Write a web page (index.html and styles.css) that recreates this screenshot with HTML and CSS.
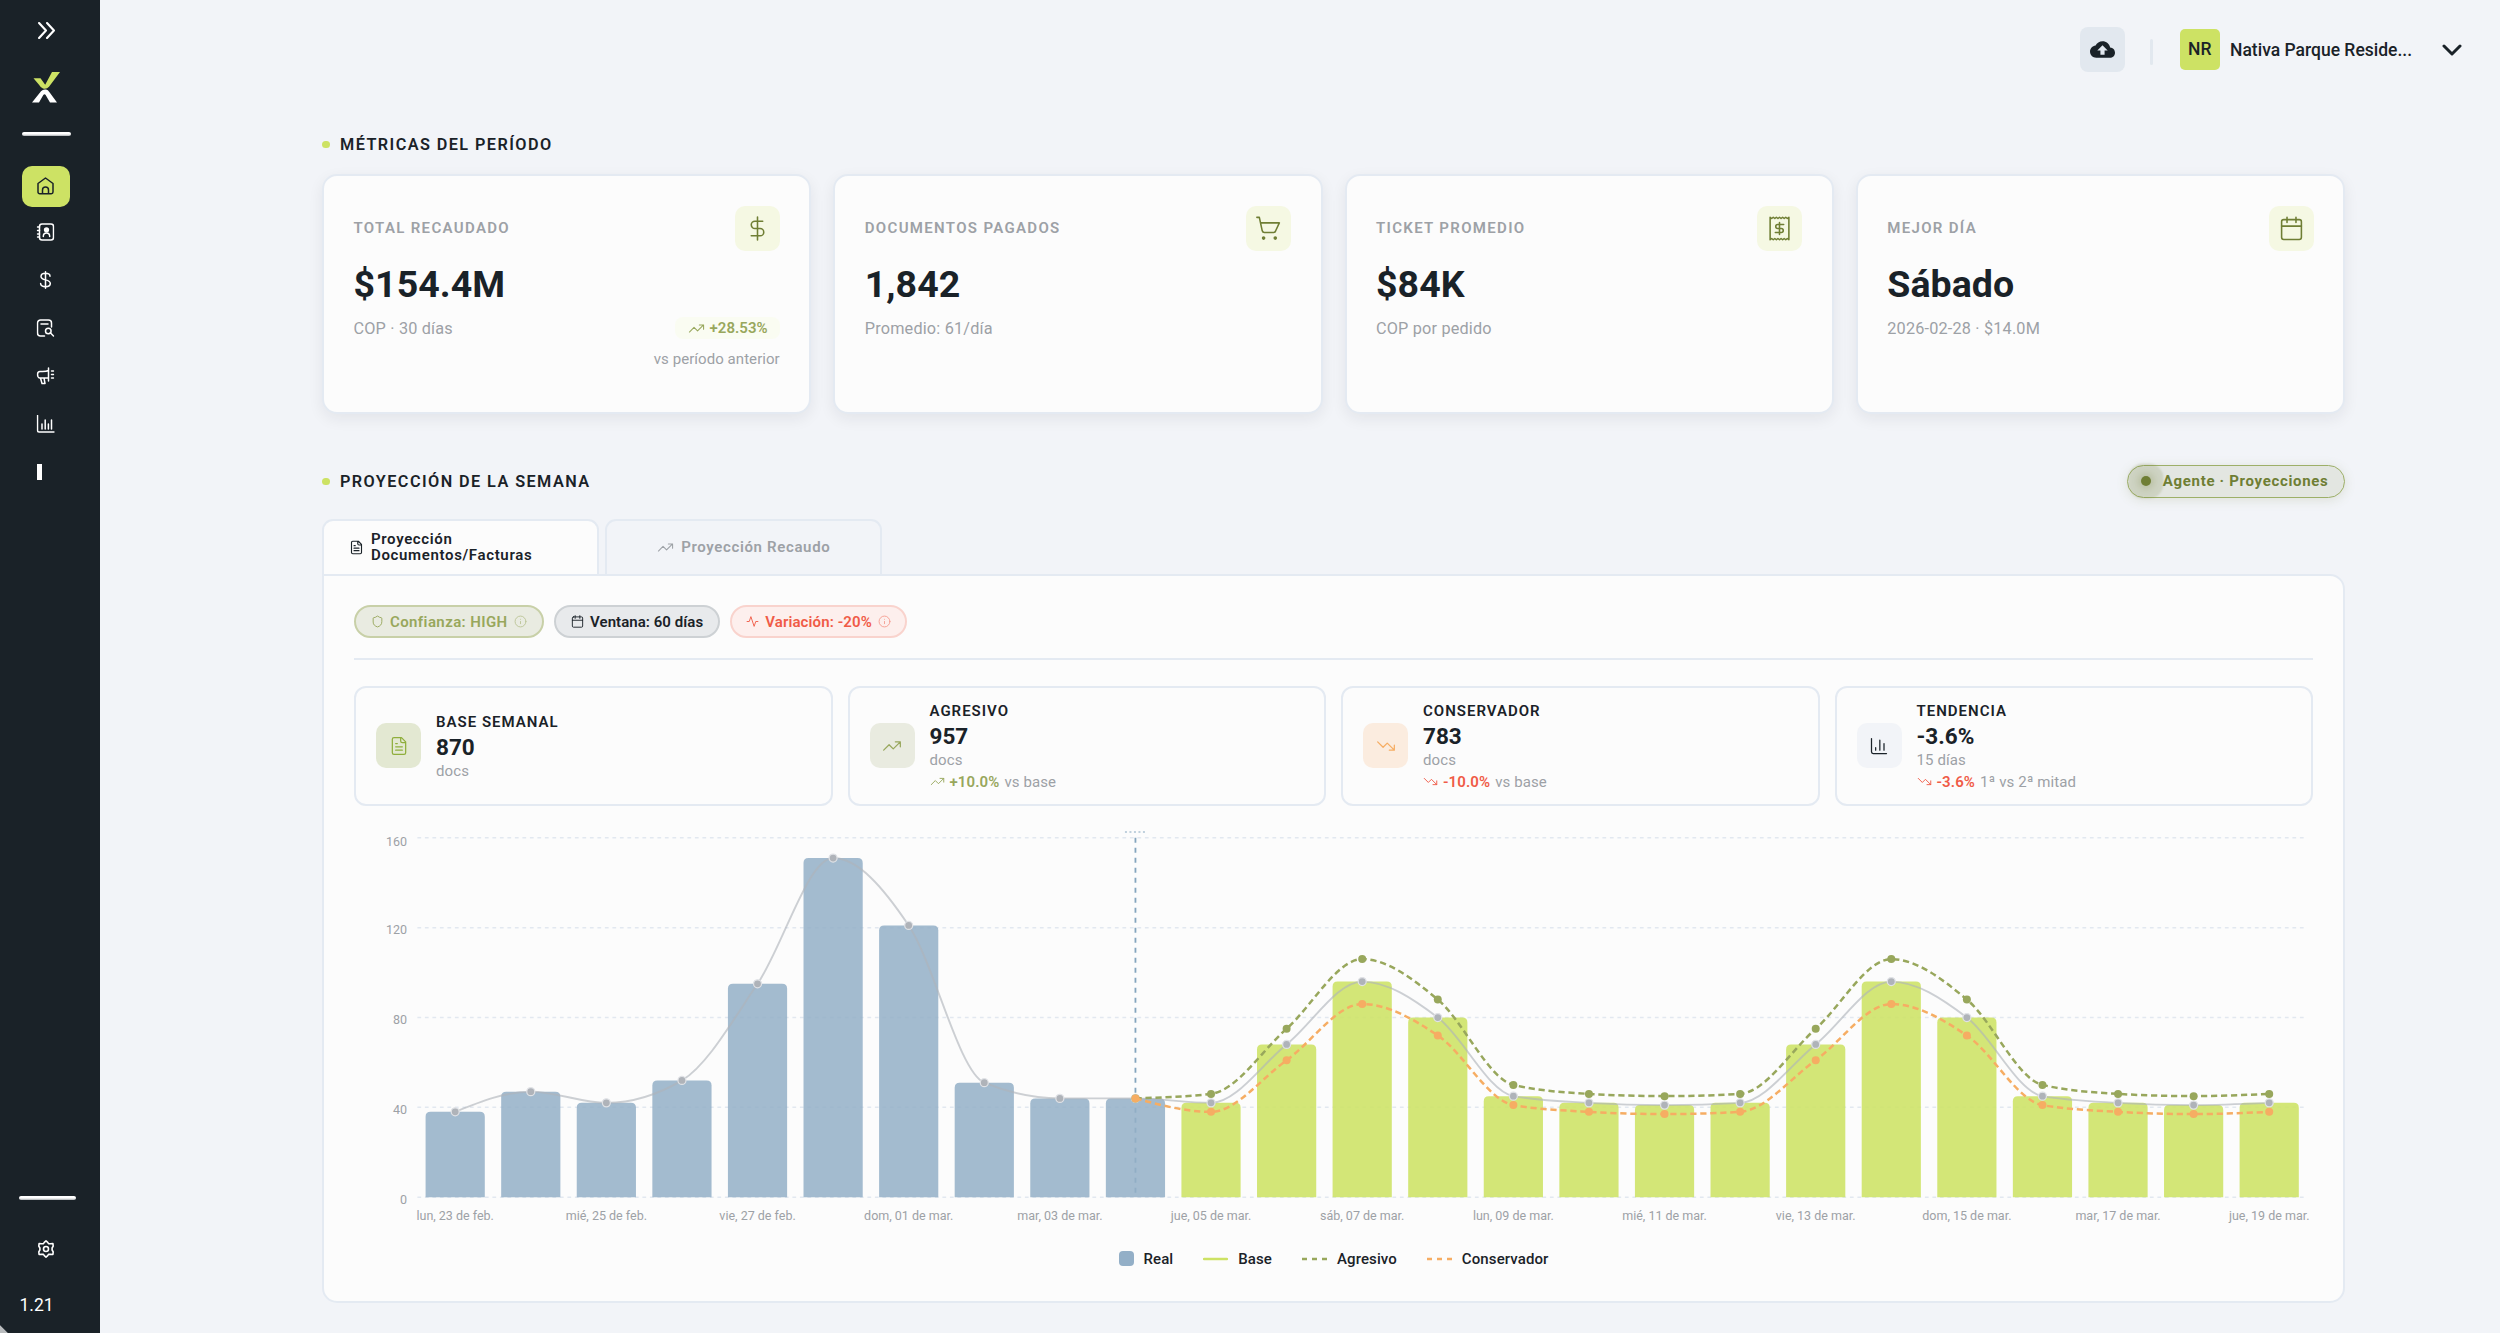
FILE: index.html
```html
<!DOCTYPE html>
<html lang="es">
<head>
<meta charset="utf-8">
<title>Métricas y proyecciones</title>
<link rel="stylesheet" href="styles.css">
</head>
<body>
<svg class="sprite" aria-hidden="true">
  <symbol id="i-dollar" viewBox="0 0 24 24"><path d="M12 1v22M17 5H9.500a3.500 3.500 0 0 0 0 7h5a3.500 3.500 0 0 1 0 7H6"/></symbol>
  <symbol id="i-cart" viewBox="0 0 24 24"><circle cx="7.300" cy="21.200" r="1" fill="currentColor"/><circle cx="18.500" cy="21.200" r="1" fill="currentColor"/><path d="M.8 1.300h2.400L6 14.200q.4 1.600 2 1.600h9q1.500 0 1.900-1.600L22.400 6.600H4.400"/></symbol>
  <symbol id="i-receipt" viewBox="0 0 24 24"><path d="M3 1.200l1.500 1.200 1.500-1.200 1.500 1.200 1.500-1.200 1.500 1.200L12 1.200l1.500 1.200 1.500-1.200 1.500 1.200 1.500-1.200 1.500 1.200L21 1.200v21.600l-1.500-1.200-1.500 1.200-1.500-1.200-1.500 1.200-1.500-1.200-1.500 1.200-1.500-1.200L9 22.800l-1.500-1.200L6 22.800l-1.500-1.200L3 22.800z"/><path d="M16 8.200h-5.700a1.900 1.900 0 0 0 0 3.800h3.400a1.900 1.900 0 0 1 0 3.800H8M12 6.200v11.600"/></symbol>
  <symbol id="i-calendar" viewBox="0 0 24 24"><rect x="2.500" y="3.500" width="19" height="19" rx="2"/><path d="M7.700 1.200v5M16.300 1.200v5M2.500 9.700h19"/></symbol>
  <symbol id="i-up" viewBox="0 0 24 24"><path d="M22 7l-8.500 8.500-5-5L2 17M16 7h6v6"/></symbol>
  <symbol id="i-down" viewBox="0 0 24 24"><path d="M22 17l-8.500-8.500-5 5L2 7M16 17h6v-6"/></symbol>
  <symbol id="i-file" viewBox="0 0 24 24"><path d="M15 2H6a2 2 0 0 0-2 2v16a2 2 0 0 0 2 2h12a2 2 0 0 0 2-2V7zM14 2v4a2 2 0 0 0 2 2h4M10 9H8M16 13H8M16 17H8"/></symbol>
  <symbol id="i-shield" viewBox="0 0 24 24"><path d="M20 13c0 5-3.500 7.500-7.660 8.950a1 1 0 0 1-.67-.01C7.500 20.500 4 18 4 13V6a1 1 0 0 1 1-1c2 0 4.500-1.200 6.240-2.720a1.170 1.170 0 0 1 1.520 0C14.510 3.810 17 5 19 5a1 1 0 0 1 1 1z"/></symbol>
  <symbol id="i-info" viewBox="0 0 24 24"><circle cx="12" cy="12" r="10"/><path d="M12 16v-4M12 8h.01"/></symbol>
  <symbol id="i-activity" viewBox="0 0 24 24"><path d="M22 12h-4l-3 9L9 3l-3 9H2"/></symbol>
  <symbol id="i-bars" viewBox="0 0 24 24"><path d="M3 3v16a2 2 0 0 0 2 2h16M8 17v-3M13 17V5M18 17V9"/></symbol>
</svg>

<div class="app">
  <aside class="sidebar">
    <svg class="expand" viewBox="0 0 16 16"><path d="M1 1l6.500 7L1 15M8.500 1L15 8l-6.500 7"/></svg>
    <svg class="logo" viewBox="0 0 28 32"><path class="logo-top" d="M1.500 7.300h7l4.700 6.500L20 1h8L17 15.700q-2.500 3-6 1.800-2.500-.9-4-3.700z"/><path class="logo-bottom" d="M0 31.500L9 20.300q2-2.300 5-1.700 2 .3 3.500 2.700L25 31.500h-7l-4.500-7.800q-1.200-1-2.200.3L7 31.500z"/></svg>
    <hr class="rule">
    <nav class="nav">
      <a class="nav-item active"><svg viewBox="0 0 18 18"><path d="M1.500 6.500L9 1l7.500 5.500V15a1.700 1.700 0 0 1-1.700 1.700H3.200A1.700 1.700 0 0 1 1.500 15zM6 16.500V13a3 3 0 0 1 6 0v3.500"/></svg></a>
      <a class="nav-item"><svg viewBox="0 0 18 18"><rect x="3" y="1" width="14" height="16" rx="2.500"/><path d="M1 4h2M1 7.500h2M1 11h2M1 14h2M6.800 13.500c0-2 1.200-3.500 3.200-3.500s3.200 1.500 3.200 3.500"/><circle class="solid" cx="10" cy="6.800" r="1.900"/></svg></a>
      <a class="nav-item"><svg viewBox="0 0 18 18"><path d="M9 .8v16.400M13.500 5.200c0-1.900-1.800-3-4.500-3s-4.500 1.200-4.500 3.200c0 4.600 9.300 2.300 9.300 7.100 0 2-1.900 3.200-4.800 3.200s-4.900-1.200-4.900-3.200"/></svg></a>
      <a class="nav-item"><svg viewBox="0 0 18 18"><path d="M8 17H4a3 3 0 0 1-3-3V4a3 3 0 0 1 3-3h8a3 3 0 0 1 3 3v4M4.500 5h7M13.800 13.800L17 17"/><circle cx="11.800" cy="12" r="2.800"/></svg></a>
      <a class="nav-item"><svg viewBox="0 0 18 18"><path d="M12 1v13M12 3.500C9 5 6 4.500 3.500 4.500 2 4.500 1 6 1 7.500S2 11 3.500 11H12M4 11l1.500 5.500h3L7.500 11M15 4h2M15 7.500h2M15 11h2"/></svg></a>
      <a class="nav-item"><svg viewBox="0 0 18 18"><path d="M1 .5V15.500a1.500 1.500 0 0 0 1.500 1.500H18M5.500 9v5M8.700 5v9M11.900 9v5M15 5v9"/></svg></a>
      <a class="nav-item"><span class="block"></span></a>
    </nav>
    <div class="side-foot">
      <hr class="rule wide">
      <svg class="gear" viewBox="0 0 18 18"><path d="M7.300 2.400L9 .9l1.700 1.500.8 1.200 2 .1 2.400-.2.300 2.600-1.100 1.900v2l1.100 1.900-.3 2.600-2.400-.2-2 .1-.8 1.200L9 17.100l-1.700-1.500-.8-1.200-2-.1-2.400.2-.3-2.600L2.900 10V8L1.800 6.100l.3-2.600 2.400.2 2-.1z"/><circle cx="9" cy="9" r="2.500"/></svg>
      <span class="version">1.21</span>
    </div>
  </aside>

  <div class="page">
    <header class="topbar">
      <button class="upload"><svg viewBox="0 0 24 24"><path d="M19.350 10.040C18.670 6.590 15.640 4 12 4 9.110 4 6.600 5.640 5.350 8.040 2.340 8.360 0 10.910 0 14c0 3.310 2.690 6 6 6h13c2.760 0 5-2.240 5-5 0-2.640-2.050-4.780-4.650-4.960zM14 13v4h-4v-4H7l5-5 5 5h-3z"/></svg></button>
      <span class="sep"></span>
      <span class="avatar">NR</span>
      <span class="company">Nativa Parque Reside...</span>
      <svg class="caret" viewBox="0 0 20 12"><path d="M2 2l8 8 8-8"/></svg>
    </header>

    <main class="content">
      <div class="section-head"><h2>MÉTRICAS DEL PERÍODO</h2></div>
      <section class="metrics">
        <article class="metric">
          <div class="metric-head"><span>TOTAL RECAUDADO</span><i class="tile"><svg><use href="#i-dollar"/></svg></i></div>
          <strong>$154.4M</strong>
          <div class="metric-foot"><span>COP · 30 días</span>
            <div class="compare"><b><svg><use href="#i-up"/></svg>+28.53%</b><small>vs período anterior</small></div></div>
        </article>
        <article class="metric">
          <div class="metric-head"><span>DOCUMENTOS PAGADOS</span><i class="tile"><svg><use href="#i-cart"/></svg></i></div>
          <strong>1,842</strong>
          <div class="metric-foot"><span>Promedio: 61/día</span></div>
        </article>
        <article class="metric">
          <div class="metric-head"><span>TICKET PROMEDIO</span><i class="tile"><svg><use href="#i-receipt"/></svg></i></div>
          <strong>$84K</strong>
          <div class="metric-foot"><span>COP por pedido</span></div>
        </article>
        <article class="metric">
          <div class="metric-head"><span>MEJOR DÍA</span><i class="tile"><svg><use href="#i-calendar"/></svg></i></div>
          <strong>Sábado</strong>
          <div class="metric-foot"><span>2026-02-28 · $14.0M</span></div>
        </article>
      </section>

      <div class="section-head second"><h2>PROYECCIÓN DE LA SEMANA</h2><span class="agent"><i></i>Agente · Proyecciones</span></div>
      <div class="tabs">
        <button class="tab current"><svg><use href="#i-file"/></svg><span>Proyección Documentos/Facturas</span></button>
        <button class="tab"><svg><use href="#i-up"/></svg><span>Proyección Recaudo</span></button>
      </div>
      <section class="panel">
        <div class="chips">
          <span class="chip olive"><svg><use href="#i-shield"/></svg>Confianza: HIGH<svg class="info"><use href="#i-info"/></svg></span>
          <span class="chip dark"><svg><use href="#i-calendar"/></svg>Ventana: 60 días</span>
          <span class="chip red"><svg><use href="#i-activity"/></svg>Variación: -20%<svg class="info"><use href="#i-info"/></svg></span>
        </div>
        <div class="stats">
          <article class="stat"><i class="tile green"><svg><use href="#i-file"/></svg></i>
            <div><h3>BASE SEMANAL</h3><strong>870</strong><p>docs</p></div></article>
          <article class="stat"><i class="tile sage"><svg><use href="#i-up"/></svg></i>
            <div><h3>AGRESIVO</h3><strong>957</strong><p>docs</p><p class="delta gain"><svg><use href="#i-up"/></svg><b>+10.0%</b>vs base</p></div></article>
          <article class="stat"><i class="tile orange"><svg><use href="#i-down"/></svg></i>
            <div><h3>CONSERVADOR</h3><strong>783</strong><p>docs</p><p class="delta loss"><svg><use href="#i-down"/></svg><b>-10.0%</b>vs base</p></div></article>
          <article class="stat"><i class="tile plain"><svg><use href="#i-bars"/></svg></i>
            <div><h3>TENDENCIA</h3><strong>-3.6%</strong><p>15 días</p><p class="delta loss"><svg><use href="#i-down"/></svg><b>-3.6%</b>1ª vs 2ª mitad</p></div></article>
        </div>
        <svg class="chart" id="chart" viewBox="0 0 1960 415"></svg>
        <div class="legend">
          <span><i class="swatch"></i>Real</span>
          <span><svg class="key base" viewBox="0 0 25 4"><path d="M1 2h23"/></svg>Base</span>
          <span><svg class="key high" viewBox="0 0 25 4"><path d="M0 2h25"/></svg>Agresivo</span>
          <span><svg class="key low" viewBox="0 0 25 4"><path d="M0 2h25"/></svg>Conservador</span>
        </div>
      </section>
    </main>
  </div>
</div>
<script src="chart.js"></script>
</body>
</html>
```
FILE: styles.css
```css
* { box-sizing: border-box; }
body {
  margin: 0;
  background: #f2f4f8;
  color: #1a2228;
  font-family: Roboto, "Liberation Sans", sans-serif;
  font-size: 15px;
}
h2, h3, p { margin: 0; font-size: inherit; }
button { font: inherit; border: 0; padding: 0; }
i { font-style: normal; }
svg { display: block; flex: none; fill: none; stroke: currentColor; stroke-width: 1.5; stroke-linecap: round; stroke-linejoin: round; }
.sprite { position: absolute; width: 0; height: 0; }
.app { display: flex; height: 1333px; overflow: hidden; }

/* Sidebar */
.sidebar {
  width: 100px;
  flex: none;
  padding: 22px 0 18.500px;
  display: flex;
  flex-direction: column;
  background: linear-gradient(45deg, #b9bcbe 5px, transparent 6px), #1a2228;
  color: #fff;
}
.expand { width: 17px; height: 17px; margin-left: 38px; stroke-width: 2; }
.logo { width: 28px; height: 32px; margin: 32px 0 0 31.500px; stroke: none; }
.logo-top { fill: #cde264; }
.logo-bottom { fill: #fff; }
.rule { width: 49px; height: 4px; margin: 29px 0 0 21.500px; border: 0; border-radius: 2px; background: linear-gradient(#fff 50%, #a9adb0); flex: none; }
.nav { display: flex; flex-direction: column; gap: 7px; margin: 30px 0 0 22px; }
.nav-item { width: 48px; height: 41px; border-radius: 10px; display: flex; align-items: center; justify-content: center; }
.nav-item.active + .nav-item { margin-top: -2.500px; }
.nav-item svg { width: 18px; height: 18px; stroke-width: 1.500; transform: translateX(-.5px); }
.nav-item.active { background: #cde264; color: #1a2228; }
.nav-item.active svg { transform: translate(-.5px, -1px); }
.nav-item .solid { fill: currentColor; }
.block { width: 5px; height: 16px; background: #fff; margin-right: 13px; }
.side-foot { margin-top: auto; }
.rule.wide { width: 57px; margin: 0 0 40px 19px; }
.gear { width: 18px; height: 18px; margin-left: 37px; stroke-width: 1.600; }
.version { display: block; margin: 36.500px 0 0 19.500px; font-size: 17.500px; line-height: 20px; }

/* Top bar */
.page { flex: 1; min-width: 0; }
.topbar { height: 99px; padding: 0 38px 0 0; display: flex; align-items: center; justify-content: flex-end; }
.upload { width: 45px; height: 45px; border-radius: 8px; background: #e2e8ef; display: grid; place-items: center; color: #1a2228; }
.upload svg { width: 25px; height: 25px; fill: currentColor; stroke: none; }
.sep { width: 3px; height: 26px; margin: 4px 26.500px 0 25px; background: #e2e8ef; border-radius: 2px; }
.avatar { width: 40.500px; height: 41px; border-radius: 5px; background: #cde264; display: grid; place-items: center; font-size: 17.500px; font-weight: 500; padding-bottom: 2px; }
.company { width: 214px; margin-left: 10px; font-size: 17.500px; font-weight: 500; white-space: nowrap; }
.caret { width: 20px; height: 12px; margin-left: -2px; stroke-width: 3; }

/* Sections */
.content { width: 2023px; margin-left: 222px; padding-top: 33px; }
.section-head { display: flex; align-items: center; justify-content: space-between; height: 25px; }
.section-head.second { height: 32.500px; margin-top: 51px; }
.section-head h2 { display: flex; align-items: center; gap: 10.500px; font-size: 16.250px; font-weight: 600; letter-spacing: 1.420px; }
.section-head h2::before { content: ""; width: 7.500px; height: 7.500px; border-radius: 50%; background: #cde264; }
.agent { height: 33px; padding: 0 15.500px 0 12.500px; display: flex; align-items: center; gap: 12px; border: 1.500px solid #9daf68; border-radius: 17px; background: #e3e6e1; color: #6f7e34; font-weight: 700; letter-spacing: .680px; box-shadow: 0 2px 12px rgba(111, 126, 52, .16); }
.agent i { width: 10px; height: 10px; border-radius: 50%; background: #6f7e34; box-shadow: 0 0 10px 2px rgba(111, 126, 52, .35), 0 0 2px 12.500px rgba(111, 126, 52, .17); }

.metrics { display: grid; grid-template-columns: repeat(4, 1fr); gap: 22px; margin-top: 16.600px; }
.metric { height: 240.500px; padding: 30px 29.500px; border: 2px solid #e4eaf2; border-radius: 15px; background: #fcfcfc; box-shadow: 0 5px 15px rgba(26, 34, 40, .07); }
.metric-head { display: flex; justify-content: space-between; align-items: center; color: #9da1a6; font-weight: 600; letter-spacing: 1.330px; }
.tile { width: 45px; height: 45px; flex: none; border-radius: 10px; display: grid; place-items: center; background: #f5f8e3; color: #6f7e34; }
.tile svg { width: 25px; height: 25px; stroke-width: 1.500; }
.metric strong { display: block; margin-top: 11.500px; font-size: 37.500px; line-height: 45px; font-weight: 700; letter-spacing: .05px; }
.metric-foot { display: flex; justify-content: space-between; align-items: flex-start; margin-top: 10px; color: #9da1a6; font-size: 16.250px; line-height: 24px; letter-spacing: .18px; }
.compare { display: flex; flex-direction: column; align-items: flex-end; letter-spacing: .06px; }
.compare b { display: flex; align-items: center; gap: 4px; height: 22px; padding: 0 12px 0 13px; border-radius: 8px; background: #fafcf2; color: #98a75c; font-size: 15px; font-weight: 600; }
.compare b svg { width: 17px; height: 17px; }
.compare small { margin-top: 10px; font-size: 15px; line-height: 20px; }

/* Tabs and panel */
.tabs { display: flex; gap: 6px; margin-top: 21px; }
.tab { width: 277px; height: 55px; display: flex; align-items: center; justify-content: center; gap: 7.500px; border: 2px solid #e4eaf2; border-bottom: 0; border-radius: 11px 11px 0 0; background: #f2f4f8; color: #9da1a6; font-weight: 600; letter-spacing: .650px; line-height: 16.500px; text-align: left; }
.tab svg { width: 17px; height: 17px; }
.tab.current { background: #fcfcfc; color: #1a2228; padding: 0 26px 0 25px; justify-content: flex-start; gap: 7px; }
.tab.current svg { width: 15px; height: 15px; stroke-width: 1.800; }
.panel { height: 729.500px; padding: 29.500px 30px; border: 2px solid #e4eaf2; border-radius: 0 15px 15px 15px; background: #fcfcfc; }
.chips { display: flex; gap: 10px; padding-bottom: 20px; border-bottom: 2px solid #e4eaf2; }
.chip { height: 33px; padding: 0 15px; display: flex; align-items: center; gap: 6px; border: 2px solid; border-radius: 17px; font-weight: 600; }
.chip svg { width: 13px; height: 13px; stroke-width: 1.700; }
.chip .info { opacity: .55; margin-left: .5px; }
.olive { background: #e9ebe1; border-color: #c8d0a8; color: #98a75c; letter-spacing: .4px; }
.dark { background: #e8eaec; border-color: #cdd1d4; color: #1a2228; letter-spacing: .05px; }
.red { background: #fdefed; border-color: #f9d3cd; color: #f05b47; letter-spacing: .12px; padding: 0 14px; }
.stats { display: grid; grid-template-columns: repeat(4, 1fr); gap: 15px; margin-top: 25.500px; }
.stat { height: 120.500px; padding: 0 20px; display: flex; align-items: center; gap: 15px; border: 2px solid #e4eaf2; border-radius: 12px; }
.stat .tile svg { width: 20px; height: 20px; }
.green { background: #e3e8d2; color: #8fae3c; }
.sage { background: #e9ebe0; color: #98a75c; }
.orange { background: #fbecdf; color: #f6ad63; }
.plain { background: #f2f4f8; color: #1a2228; }
.stat h3 { line-height: 22px; font-weight: 600; letter-spacing: 1px; }
.stat strong { display: block; font-size: 22.500px; line-height: 28px; font-weight: 700; }
.stat p { line-height: 20px; color: #9da1a6; letter-spacing: .1px; }
.stat .delta { display: flex; align-items: center; gap: 5px; margin-top: 2px; }
.delta svg { width: 15px; height: 15px; }
.delta b { font-weight: 600; }
.gain b, .gain svg { color: #98a75c; }
.loss b, .loss svg { color: #f05b47; }

/* Chart */
.chart { width: 1960px; height: 415px; margin-top: 15px; }
.chart text { fill: #9da1a6; stroke: none; font-size: 12.500px; }
.chart .grid { stroke: #e2e8f0; stroke-width: 1.500; stroke-dasharray: 3.750 3.750; stroke-linecap: butt; }
.chart .today { stroke: #84a5be; stroke-width: 1.800; stroke-dasharray: 5 5; stroke-linecap: butt; }
.chart .today-cap { stroke: #84a5be; stroke-width: 1; stroke-dasharray: 2 2.500; stroke-linecap: butt; }
.chart .bar { stroke: none; fill: #93afc7; fill-opacity: .85; }
.chart .bar.future { fill: #cde264; fill-opacity: .88; }
.chart .trend { stroke: #afb3b9; stroke-opacity: .62; stroke-width: 1.900; }
.chart .high, .chart .low { stroke-width: 2.500; stroke-dasharray: 6.250 3.750; stroke-linecap: butt; }
.chart .high { stroke: #98a75c; }
.chart .low { stroke: #f6ad63; }
.chart .dot { fill: #afb3b9; stroke: #e0e2e6; stroke-width: 1.250; }
.chart .high-dot { fill: #98a75c; stroke: none; }
.chart .low-dot { fill: #f6ad63; stroke: none; }
.legend { height: 45px; display: flex; align-items: center; justify-content: center; gap: 30px; font-weight: 500; letter-spacing: .1px; }
.legend span { display: flex; align-items: center; gap: 10px; }
.swatch { width: 15px; height: 15px; border-radius: 4px; background: #93afc7; }
.key { width: 25px; height: 4px; stroke-width: 2.500; }
.key.base { stroke: #cde264; }
.key.high, .key.low { stroke-dasharray: 5 5; stroke-linecap: butt; }
.key.high { stroke: #98a75c; }
.key.low { stroke: #f6ad63; }
```
FILE: chart.js
```js
const real = [38, 47, 42, 52, 95, 151, 121, 51, 44, 44];
const base = [42, 68, 96, 80, 45, 42, 41, 42, 68, 96, 80, 45, 42, 41, 42];
const high = [44, 46, 75, 106, 88, 50, 46, 45, 46, 75, 106, 88, 50, 46, 45, 46];
const low = [44, 38, 61, 86, 72, 41, 38, 37, 38, 61, 86, 72, 41, 38, 37, 38];
const labels = ['lun, 23 de feb.', 'mié, 25 de feb.', 'vie, 27 de feb.', 'dom, 01 de mar.', 'mar, 03 de mar.',
  'jue, 05 de mar.', 'sáb, 07 de mar.', 'lun, 09 de mar.', 'mié, 11 de mar.', 'vie, 13 de mar.',
  'dom, 15 de mar.', 'mar, 17 de mar.', 'jue, 19 de mar.'];

const left = 63.4, right = 1953, floor = 376.2, unit = 2.246;
const step = (right - left) / 25;
const px = i => left + step * (i + 0.5);
const py = v => floor - v * unit;

// Monotone cubic interpolation through evenly spaced points.
function curve(values, from) {
  const p = values.map((v, i) => [px(from + i), py(v)]);
  const n = p.length;
  const s = p.slice(1).map((q, i) => (q[1] - p[i][1]) / step);
  const m = [];
  for (let i = 1; i < n - 1; i++) {
    const a = s[i - 1], b = s[i];
    m[i] = (Math.sign(a) + Math.sign(b)) * Math.min(Math.abs(a), Math.abs(b), Math.abs(a + b) / 4) || 0;
  }
  m[0] = (3 * s[0] - m[1]) / 2;
  m[n - 1] = (3 * s[n - 2] - m[n - 2]) / 2;
  let d = `M${p[0]}`;
  for (let i = 0; i < n - 1; i++) {
    const h = step / 3;
    d += `C${p[i][0] + h},${p[i][1] + m[i] * h} ${p[i + 1][0] - h},${p[i + 1][1] - m[i + 1] * h} ${p[i + 1]}`;
  }
  return d;
}

const all = real.concat(base);
let out = '';
[0, 40, 80, 120, 160].forEach(v => {
  out += `<path class="grid" d="M${left} ${py(v)}H${right}"/>`;
  out += `<text x="53" y="${py(v) + (v === 160 ? 8 : 6.700)}" text-anchor="end">${v}</text>`;
});
out += `<path class="today" d="M${px(9)} ${py(160)}V${floor}"/><path class="today-cap" d="M${px(9) - 10.500} 11h21"/>`;
all.forEach((v, i) => {
  const x = px(i) - 29.600, y = py(v), w = 59.200, r = 5;
  out += `<path class="bar${i > 9 ? ' future' : ''}" d="M${x} ${floor}V${y + r}q0 ${-r} ${r} ${-r}h${w - 2 * r}q${r} 0 ${r} ${r}V${floor}z"/>`;
});
out += `<path class="trend" d="${curve(all, 0)}"/>`;
all.forEach((v, i) => { out += `<circle class="dot" cx="${px(i)}" cy="${py(v)}" r="4"/>`; });
[['high', high], ['low', low]].forEach(([name, values]) => {
  out += `<path class="${name}" d="${curve(values, 9)}"/>`;
  values.forEach((v, i) => { out += `<circle class="${name}-dot" cx="${px(9 + i)}" cy="${py(v)}" r="4"/>`; });
});
labels.forEach((t, i) => { out += `<text x="${px(i * 2)}" y="399.200" text-anchor="middle">${t}</text>`; });
document.getElementById('chart').innerHTML = out;
```
